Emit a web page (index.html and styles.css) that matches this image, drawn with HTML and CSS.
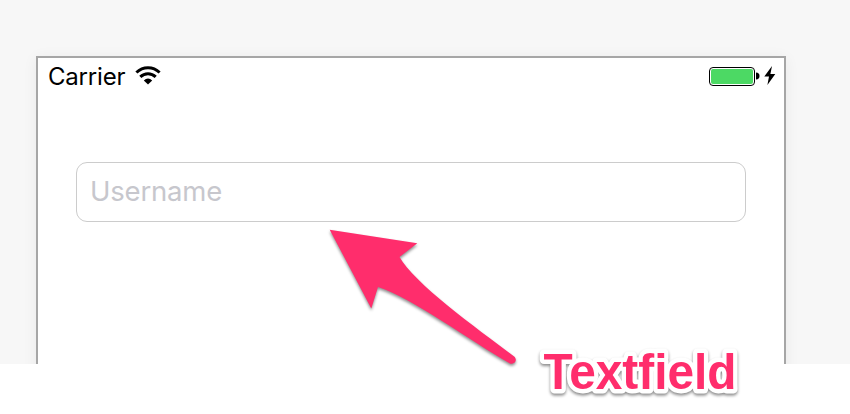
FILE: index.html
```html
<!DOCTYPE html>
<html lang="en">
<head>
<meta charset="utf-8">
<title>Textfield</title>
<link rel="stylesheet" href="styles.css">
</head>
<body>
<main class="stage">
  <section class="phone">
    <header class="status">
      <span class="carrier">Carrier</span>
      <svg class="wifi" width="26" height="20" viewBox="0 0 26 20">
        <g fill="none" stroke="#000" stroke-width="3">
          <path d="M1.4 6.5C8 .2 18 .2 24.6 6.5"/>
          <path d="M5.3 10.9C9.7 6.7 16.3 6.7 20.7 10.9"/>
        </g>
        <path d="M8.8 14.4Q13 10.7 17.2 14.4L13 18.6Z"/>
      </svg>
      <span class="power">
        <span class="battery"><span class="charge"></span></span>
        <svg class="cap" width="4" height="8" viewBox="0 0 4 8"><path d="M0 .5Q3.5.8 3.5 4T0 7.5Z"/></svg>
        <svg class="bolt" width="12" height="20" viewBox="0 0 12 20"><path d="M8 0L.3 10.5H5L3.4 19L11.3 8.1H6.4Z"/></svg>
      </span>
    </header>
    <input class="field" type="text" placeholder="Username" aria-label="Username">
  </section>
</main>
<svg class="notes" width="850" height="414" viewBox="0 0 850 414">
  <path class="arrow" d="M329.7 229.7L417.3 243.3L399.5 257C414 283 475 327 514.2 356.5C518 360 514.5 365.5 509.5 363.2C470 341 414 299 378 287L371.3 308.5Z"/>
  <text class="label" x="543.5" y="389" textLength="193" lengthAdjust="spacingAndGlyphs">Textfield</text>
</svg>
</body>
</html>
```
FILE: styles.css
```css
* { box-sizing: border-box; }

body {
  margin: 0;
  height: 414px;
  overflow: hidden;
  background: #fff;
  font-family: Inter, "Liberation Sans", sans-serif;
}

.stage {
  height: 364px;
  padding: 56px 64px 0 36px;
  overflow: hidden;
  background: #f7f7f7;
}

.phone {
  height: 340px;
  border: 2px solid #a6a6a6;
  background: #fff;
  box-shadow: 0 2px 14px rgba(0, 0, 0, .06);
}

.status {
  display: flex;
  align-items: center;
  height: 36px;
  padding: 0 8px 0 10px;
}

.carrier {
  font-size: 24px;
  letter-spacing: -.2px;
}

.wifi { margin-left: 10px; }

.power {
  display: flex;
  align-items: center;
  margin-left: auto;
}

.battery {
  width: 46px;
  height: 19px;
  padding: 1px;
  border: 1px solid #000;
  border-radius: 4px;
}

.charge {
  display: block;
  height: 100%;
  border-radius: 2px;
  background: #4cd964;
}

.cap { margin: 0 4px 0 1px; }

.field {
  display: block;
  width: 670px;
  height: 60px;
  margin: 68px 0 0 38px;
  padding: 0 13px 2px;
  border: 1px solid #ccc;
  border-radius: 11px;
  outline: 0;
  font: 27.5px Inter, "Liberation Sans", sans-serif;
  letter-spacing: -.2px;
}

.field::placeholder {
  color: #c7c7cd;
  opacity: 1;
}

.notes {
  position: absolute;
  top: 0;
  left: 0;
  pointer-events: none;
}

.arrow {
  fill: #ff2d6c;
  filter: drop-shadow(0 2px 1.5px rgba(0, 0, 0, .45));
}

.label {
  fill: #ff2d6c;
  stroke: #fff;
  stroke-width: 9px;
  stroke-linejoin: round;
  paint-order: stroke;
  font: bold 50px "Liberation Sans", sans-serif;
  filter: drop-shadow(0 2px 1.5px rgba(0, 0, 0, .45));
}
```
